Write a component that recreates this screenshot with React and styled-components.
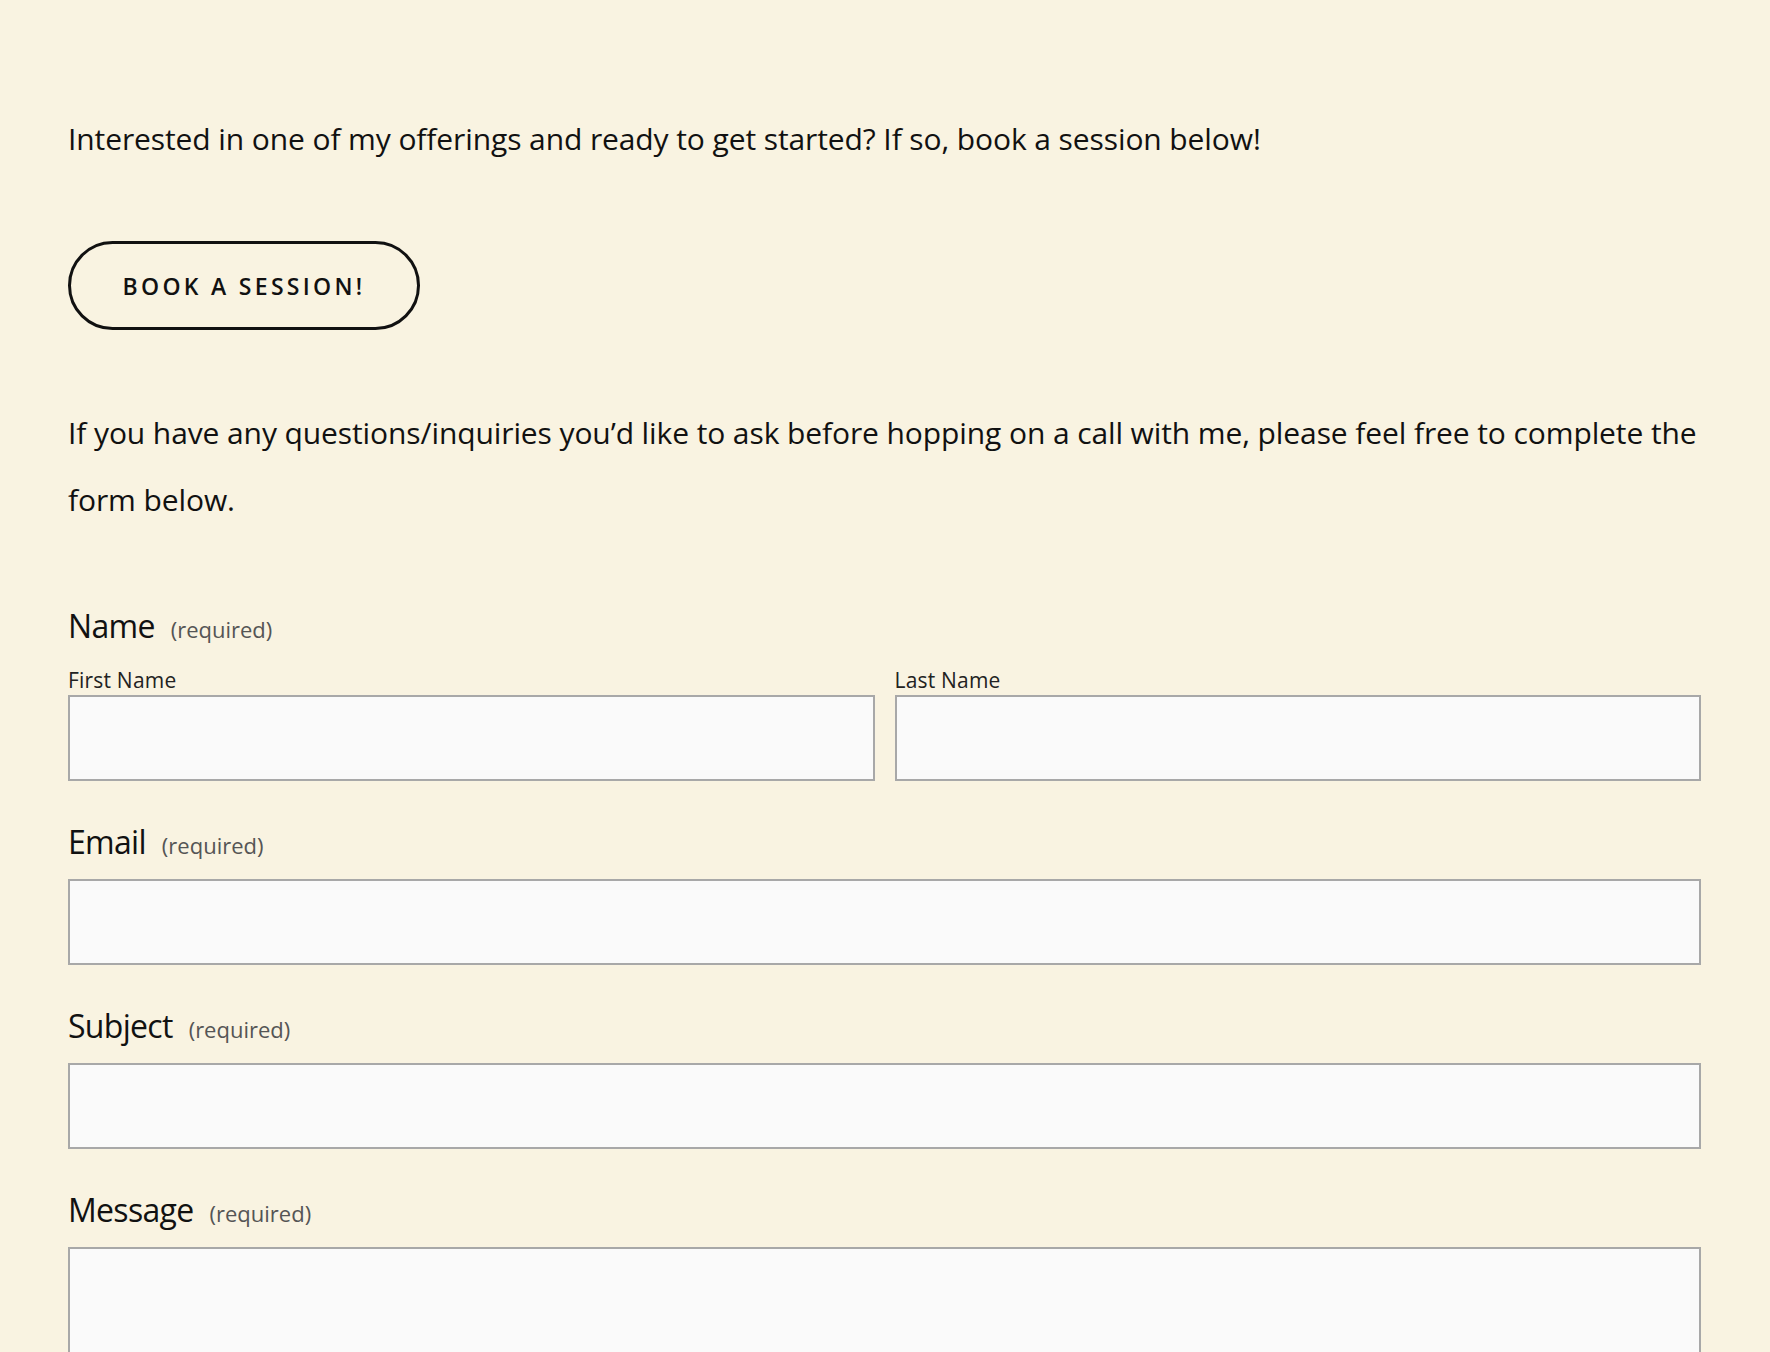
import React from 'react'
import styled, { createGlobalStyle } from 'styled-components'

const GlobalStyle = createGlobalStyle`
  html, body {
    margin: 0;
    padding: 0;
    background: #f9f3e1;
  }
  body {
    font-family: "Open Sans", Lato, sans-serif;
    color: #111;
  }
`

const Page = styled.main`
  min-height: 1352px;
  padding: 109px 69px 0 68px;
  box-sizing: border-box;
  background: #f9f3e1;
`

const Paragraph = styled.p`
  margin: 0;
  font-size: 30px;
  font-weight: 400;
  line-height: ${(p) => p.$lineHeight || '60px'};
  letter-spacing: -0.1px;
  color: #111;
`

const BookButton = styled.a`
  display: flex;
  align-items: center;
  justify-content: center;
  box-sizing: border-box;
  width: 352px;
  height: 89px;
  margin: 72px 0 69px;
  border: 3px solid #111;
  border-radius: 45px;
  font-size: 23px;
  font-weight: 600;
  letter-spacing: 3.3px;
  color: #111;
  text-decoration: none;
  cursor: pointer;
`

const Form = styled.form`
  display: flex;
  flex-direction: column;
  margin-top: 73px;
`

const Field = styled.div`
  display: flex;
  flex-direction: column;
  margin-top: ${(p) => (p.$first ? '0' : '41px')};
`

const Label = styled.div`
  display: flex;
  align-items: baseline;
  gap: 16px;
  font-size: 32px;
  font-weight: 400;
  letter-spacing: -0.7px;
  line-height: 40px;
  margin-bottom: ${(p) => p.$gap || '14px'};
  color: #111;
`

const Required = styled.span`
  font-size: 22px;
  letter-spacing: 0;
  color: #555;
`

const NameRow = styled.div`
  display: grid;
  grid-template-columns: 1fr 1fr;
  gap: 20px;
`

const SubField = styled.div`
  display: flex;
  flex-direction: column;
`

const SubLabel = styled.label`
  font-size: 21px;
  letter-spacing: 0.2px;
  line-height: 28px;
  margin-bottom: 1px;
  color: #222;
`

const Input = styled.input`
  box-sizing: border-box;
  width: 100%;
  height: 86px;
  border: 2px solid #a8a8a8;
  background: #fafafa;
  border-radius: 0;
  font-size: 22px;
  padding: 0 16px;
  outline: none;
`

const TextArea = styled.textarea`
  box-sizing: border-box;
  width: 100%;
  height: 200px;
  border: 2px solid #a8a8a8;
  background: #fafafa;
  border-radius: 0;
  resize: none;
  outline: none;
`

function App() {
  return (
    <>
      <GlobalStyle />
      <Page>
        <Paragraph>
          Interested in one of my offerings and ready to get started? If so, book a session below!
        </Paragraph>
        <BookButton>BOOK A SESSION!</BookButton>
        <Paragraph $lineHeight="67px">
          If you have any questions/inquiries you’d like to ask before hopping on a call with me, please feel free to complete the form below.
        </Paragraph>
        <Form onSubmit={(e) => e.preventDefault()}>
          <Field $first>
            <Label $gap="17px">
              Name <Required>(required)</Required>
            </Label>
            <NameRow>
              <SubField>
                <SubLabel>First Name</SubLabel>
                <Input type="text" />
              </SubField>
              <SubField>
                <SubLabel>Last Name</SubLabel>
                <Input type="text" />
              </SubField>
            </NameRow>
          </Field>
          <Field>
            <Label>
              Email <Required>(required)</Required>
            </Label>
            <Input type="email" />
          </Field>
          <Field>
            <Label>
              Subject <Required>(required)</Required>
            </Label>
            <Input type="text" />
          </Field>
          <Field>
            <Label>
              Message <Required>(required)</Required>
            </Label>
            <TextArea />
          </Field>
        </Form>
      </Page>
    </>
  )
}

export default App
